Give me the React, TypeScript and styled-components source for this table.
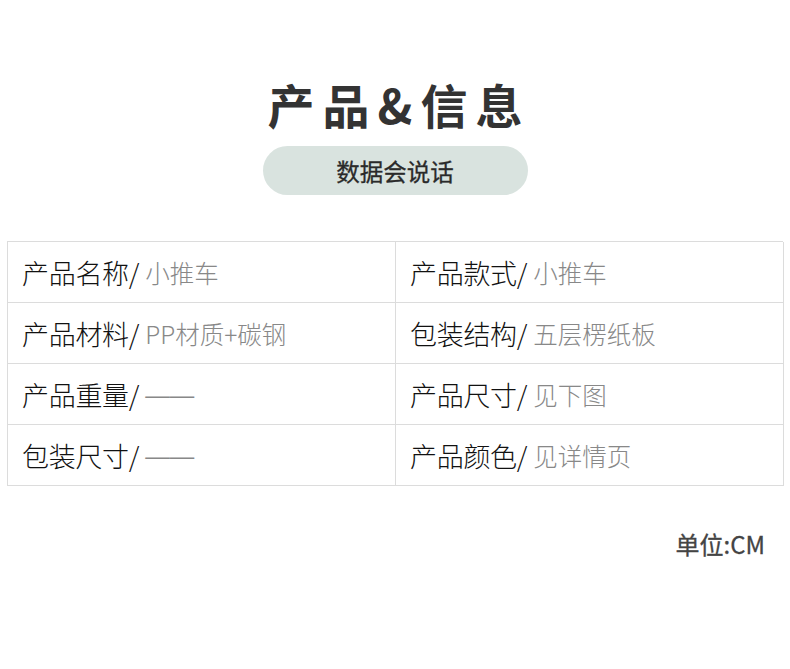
import React from 'react';
import styled, { createGlobalStyle } from 'styled-components';

const GlobalStyle = createGlobalStyle`
  html, body {
    margin: 0;
    padding: 0;
    background: #fff;
  }
  body {
    font-family: 'Noto Sans CJK SC', 'Noto Sans', sans-serif;
  }
`;

const Page = styled.div`
  width: 790px;
  height: 669px;
  display: flex;
  flex-direction: column;
  align-items: center;
  background: #fff;
`;

const Title = styled.h1`
  margin: 72px 0 0 8px;
  font-size: 47px;
  line-height: 64px;
  font-weight: 700;
  letter-spacing: 8px;
  color: #333;
`;

const Pill = styled.div`
  margin-top: 10px;
  width: 265px;
  height: 49px;
  border-radius: 25px;
  background: #d9e3df;
  display: flex;
  align-items: center;
  justify-content: center;
  font-size: 23.5px;
  font-weight: 400;
  color: #2a2a2a;
  -webkit-text-stroke: 0.3px #2a2a2a;
`;

const Table = styled.div`
  margin-top: 46px;
  width: 776px;
  display: grid;
  grid-template-columns: 388px 388px;
  border-top: 1px solid #dcdcdc;
  border-left: 1px solid #dcdcdc;
  box-sizing: border-box;
`;

const Cell = styled.div`
  height: 61px;
  box-sizing: border-box;
  border-right: 1px solid #dcdcdc;
  border-bottom: 1px solid #dcdcdc;
  display: flex;
  align-items: center;
  padding-left: 14px;
  padding-top: 1px;
`;

const Label = styled.span`
  font-size: 27px;
  font-weight: 300;
  color: #111;
  letter-spacing: -0.3px;
`;

const Value = styled.span<{ $dash?: boolean }>`
  margin-left: 6px;
  font-size: 24.5px;
  font-weight: 300;
  color: #888;
  font-family: ${p =>
    p.$dash ? "'Liberation Sans', sans-serif" : "'Noto Sans CJK SC', sans-serif"};
`;

const Unit = styled.div`
  align-self: flex-end;
  margin: 40px 25px 0 0;
  font-size: 24px;
  font-weight: 400;
  color: #444;
  -webkit-text-stroke: 0.3px #444;
`;

const rows: [string, string][] = [
  ['产品名称', '小推车'],
  ['产品款式', '小推车'],
  ['产品材料', 'PP材质+碳钢'],
  ['包装结构', '五层楞纸板'],
  ['产品重量', '——'],
  ['产品尺寸', '见下图'],
  ['包装尺寸', '——'],
  ['产品颜色', '见详情页'],
];

const App: React.FC = () => {
  return (
    <Page>
      <GlobalStyle />
      <Title>产品&amp;信息</Title>
      <Pill>数据会说话</Pill>
      <Table>
        {rows.map(([label, value], idx) => (
          <Cell key={idx}>
            <Label>{label}/</Label>
            <Value $dash={value === '——'}>{value}</Value>
          </Cell>
        ))}
      </Table>
      <Unit>单位:CM</Unit>
    </Page>
  );
};

export default App;
